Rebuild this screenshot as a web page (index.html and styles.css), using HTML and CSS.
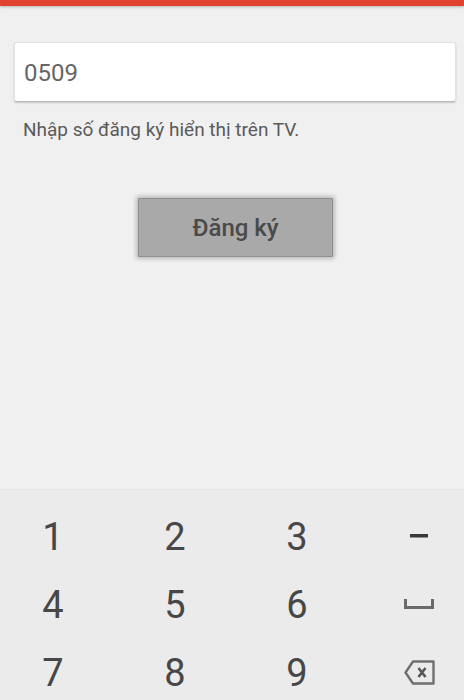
FILE: index.html
```html
<!DOCTYPE html>
<html lang="vi">
<head>
<meta charset="utf-8">
<title>Đăng ký TV</title>
<link rel="stylesheet" href="styles.css">
</head>
<body>
<div class="page">
  <div class="topbar"></div>
  <main class="main">
    <div class="field">0509</div>
    <p class="hint">Nhập số đăng ký hiển thị trên TV.</p>
    <button class="btn" type="button">Đăng ký</button>
  </main>
  <div class="keyboard">
    <div class="keys">
      <div class="key">1</div>
      <div class="key">2</div>
      <div class="key">3</div>
      <div class="key icon">
        <svg width="18" height="4" viewBox="0 0 18 4"><rect x="0" y="0" width="18" height="3.5" fill="#383838"/></svg>
      </div>
      <div class="key">4</div>
      <div class="key">5</div>
      <div class="key">6</div>
      <div class="key icon">
        <svg width="30" height="10" viewBox="0 0 30 10"><path d="M1.5 0 V8.5 H28.5 V0" fill="none" stroke="#6a6a6a" stroke-width="3"/></svg>
      </div>
      <div class="key">7</div>
      <div class="key">8</div>
      <div class="key">9</div>
      <div class="key icon">
        <svg width="31" height="25" viewBox="0 0 31 25"><path d="M9 1.5 H29.5 V23.5 H9 L1.5 12.5 Z" fill="none" stroke="#707070" stroke-width="2.4" stroke-linejoin="round"/><path d="M14.5 8 L21.5 17 M21.5 8 L14.5 17" stroke="#555" stroke-width="2.6"/></svg>
      </div>
    </div>
  </div>
</div>
</body>
</html>
```
FILE: styles.css
```css
html, body {
  margin: 0;
  padding: 0;
}
body {
  background: #f0f0f0;
  font-family: Roboto, "Noto Sans", sans-serif;
  overflow: hidden;
}
.page {
  height: 700px;
  display: flex;
  flex-direction: column;
  overflow: hidden;
}
.topbar {
  height: 6px;
  flex: none;
  background: #e0432f;
  box-shadow: 0 1px 3px rgba(0, 0, 0, 0.25);
  position: relative;
}
.main {
  flex: 1;
  padding: 36px 8px 0 14px;
}
.field {
  box-sizing: border-box;
  height: 60px;
  width: 442px;
  background: #fff;
  border: 1px solid #e2e2e2;
  border-bottom-color: #b8b8b8;
  border-radius: 3px;
  box-shadow: 0 1px 2px rgba(0, 0, 0, 0.18);
  display: flex;
  align-items: center;
  padding-left: 9px;
  padding-top: 2px;
  font-size: 24px;
  color: #666;
}
.hint {
  margin: 17px 0 0 9px;
  font-size: 19px;
  line-height: 22px;
  color: #5a5a5a;
}
.btn {
  display: block;
  margin: 57px 0 0 124px;
  width: 195px;
  height: 59px;
  background: #a9a9a9;
  border: 1px solid #8e8e8e;
  border-radius: 1px;
  box-shadow: 0 0 4px 2px rgba(0, 0, 0, 0.22);
  font-family: Roboto, "Noto Sans", sans-serif;
  font-size: 24px;
  font-weight: 500;
  color: #4a4a4a;
  padding: 0;
}
.keyboard {
  flex: none;
  height: 211px;
  background: #ebebeb;
  border-top: 1px solid #e4e4e4;
  box-sizing: border-box;
  padding-top: 12px;
}
.keys {
  display: grid;
  grid-template-columns: repeat(4, 122px);
  grid-auto-rows: 68px;
  margin-left: -8px;
}
.key {
  display: flex;
  align-items: center;
  justify-content: center;
  font-size: 38px;
  color: #474747;
  padding-top: 1px;
}
.key.icon {
  padding-top: 0;
}
```
